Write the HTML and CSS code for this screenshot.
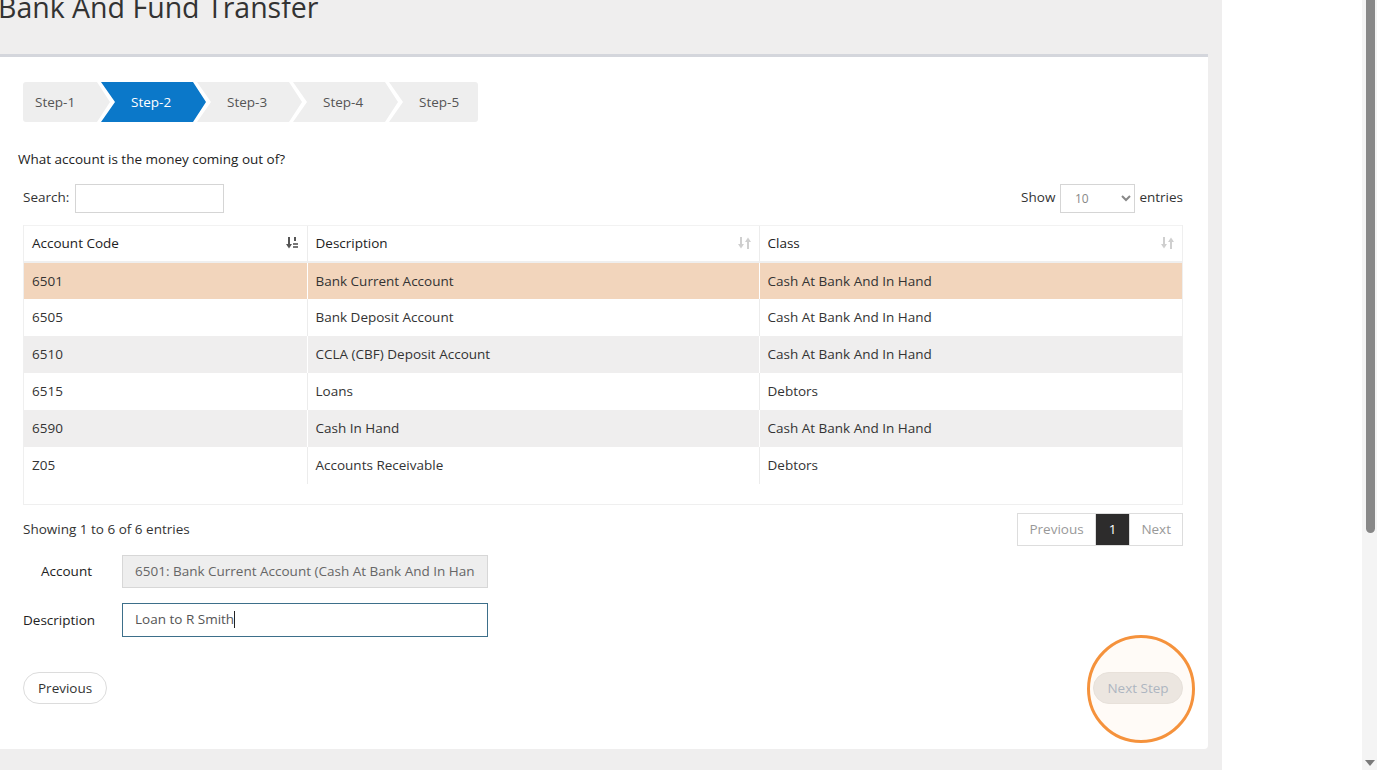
FILE: index.html
```html
<!DOCTYPE html>
<html>
<head>
  <meta charset="utf-8">
  <title>Bank And Fund Transfer</title>
  <link rel="stylesheet" href="styles.css">
</head>
<body>
  <div class="page">
    <div class="main">
      <h1 class="page-title">Bank And Fund Transfer</h1>

      <div class="panel">
        <ul class="steps">
          <li class="step first">Step-1</li>
          <li class="step active">Step-2</li>
          <li class="step">Step-3</li>
          <li class="step">Step-4</li>
          <li class="step last">Step-5</li>
        </ul>

        <p class="question">What account is the money coming out of?</p>

        <div class="table-top">
          <label class="search-label">Search: <input type="text" class="search"></label>
          <label class="length-label">Show
            <select class="length">
              <option>10</option>
              <option>25</option>
              <option>50</option>
            </select>
            entries</label>
        </div>

        <div class="table-wrap">
          <table class="accounts">
            <thead>
              <tr>
                <th class="col-code">Account Code
                  <svg class="sort-icon" width="13" height="12" viewBox="0 0 13 12">
                    <rect x="2" y="0" width="2" height="8" fill="#555"/>
                    <polygon points="0,7 6,7 3,11.5" fill="#555"/>
                    <rect x="8" y="0" width="2" height="4" fill="#555"/>
                    <rect x="7" y="6" width="5" height="2" fill="#777"/>
                    <rect x="7" y="9" width="5" height="2" fill="#777"/>
                  </svg>
                </th>
                <th class="col-desc">Description
                  <svg class="sort-icon" width="13" height="12" viewBox="0 0 13 12">
                    <rect x="2" y="0" width="2" height="8" fill="#cfcfcf"/>
                    <polygon points="0,7 6,7 3,11.5" fill="#cfcfcf"/>
                    <rect x="9" y="4" width="2" height="8" fill="#cfcfcf"/>
                    <polygon points="7,5 13,5 10,0.5" fill="#cfcfcf"/>
                  </svg>
                </th>
                <th class="col-class">Class
                  <svg class="sort-icon" width="13" height="12" viewBox="0 0 13 12">
                    <rect x="2" y="0" width="2" height="8" fill="#cfcfcf"/>
                    <polygon points="0,7 6,7 3,11.5" fill="#cfcfcf"/>
                    <rect x="9" y="4" width="2" height="8" fill="#cfcfcf"/>
                    <polygon points="7,5 13,5 10,0.5" fill="#cfcfcf"/>
                  </svg>
                </th>
              </tr>
            </thead>
            <tbody>
              <tr class="selected">
                <td>6501</td><td>Bank Current Account</td><td>Cash At Bank And In Hand</td>
              </tr>
              <tr>
                <td>6505</td><td>Bank Deposit Account</td><td>Cash At Bank And In Hand</td>
              </tr>
              <tr class="odd">
                <td>6510</td><td>CCLA (CBF) Deposit Account</td><td>Cash At Bank And In Hand</td>
              </tr>
              <tr>
                <td>6515</td><td>Loans</td><td>Debtors</td>
              </tr>
              <tr class="odd">
                <td>6590</td><td>Cash In Hand</td><td>Cash At Bank And In Hand</td>
              </tr>
              <tr>
                <td>Z05</td><td>Accounts Receivable</td><td>Debtors</td>
              </tr>
            </tbody>
          </table>
        </div>

        <div class="table-bottom">
          <div class="info">Showing 1 to 6 of 6 entries</div>
          <div class="pager">
            <a href="#" class="pg">Previous</a>
            <a href="#" class="pg current">1</a>
            <a href="#" class="pg">Next</a>
          </div>
        </div>

        <div class="form-row">
          <label class="form-label account">Account</label>
          <input type="text" class="form-input readonly" value="6501: Bank Current Account (Cash At Bank And In Hand)" readonly>
        </div>
        <div class="form-row">
          <label class="form-label">Description</label>
          <div class="form-input focused">Loan to R Smith<span class="caret"></span></div>
        </div>

        <div class="actions">
          <button type="button" class="btn-round">Previous</button>
          <div class="next-wrap">
            <button type="button" class="btn-round next" disabled>Next Step</button>
            <div class="highlight"></div>
          </div>
        </div>
      </div>
    </div>

    <div class="side"></div>

    <div class="scrollbar">
      <div class="thumb"></div>
      <div class="track"></div>
      <svg class="arrow" width="10" height="8" viewBox="0 0 10 8"><polygon points="0,1 10,1 5,7" fill="#7a7a7a"/></svg>
    </div>
  </div>
</body>
</html>
```

FILE: styles.css
```css
* {
    padding: 0px;
    margin: 0px;
    box-sizing: border-box;
}

html, body {
    height: 100%;
    overflow: hidden;
}

body {
    background-color: #fff;
    font-family: "Open Sans", "Liberation Sans", Arial, sans-serif;
    font-size: 13.5px;
    color: #333;
}

.page {
    display: flex;
    height: 770px;
}

.main {
    width: 1222px;
    background-color: #efeeee;
    padding-right: 14px;
}

.side {
    flex: 1;
    background-color: #fff;
}

/* fake browser scrollbar */
.scrollbar {
    width: 15px;
    background-color: #f4f4f4;
    display: flex;
    flex-direction: column;
    align-items: center;
    padding-bottom: 3px;
}

.scrollbar .thumb {
    width: 9px;
    height: 533px;
    background-color: #888;
    border-radius: 0 0 5px 5px;
    margin-left: 2px;
}

.scrollbar .track {
    flex: 1;
}

.scrollbar .arrow {
    margin-left: 1px;
}

.page-title {
    font-size: 28.5px;
    font-weight: 400;
    line-height: 34px;
    color: #333;
    margin-top: -10px;
    margin-bottom: 30px;
    margin-left: -2px;
}

.panel {
    background-color: #fff;
    border-top: 3px solid #d4d6dc;
    border-radius: 0 0 4px 0;
    padding: 25px 25px 45px 23px;
}

/* wizard steps */
.steps {
    list-style: none;
    display: flex;
    height: 40px;
}

.step {
    height: 40px;
    width: 105px;
    margin-left: -9px;
    padding-left: 30px;
    line-height: 40px;
    background-color: #eeeeee;
    color: #555;
    clip-path: polygon(0 0, calc(100% - 13px) 0, 100% 50%, calc(100% - 13px) 100%, 0 100%, 14px 50%);
}

.step.first {
    width: 87px;
    margin-left: 0;
    padding-left: 12px;
    border-radius: 3px 0 0 3px;
    clip-path: polygon(0 0, calc(100% - 13px) 0, 100% 50%, calc(100% - 13px) 100%, 0 100%);
}

.step.last {
    width: 89px;
    border-radius: 0 3px 3px 0;
    clip-path: polygon(0 0, 100% 0, 100% 100%, 0 100%, 14px 50%);
}

.step.active {
    background-color: #0b78c9;
    color: #fff;
}

.question {
    margin-top: 28px;
    margin-left: -5px;
    line-height: 18px;
    color: #222;
}

/* datatable controls */
.table-top {
    display: flex;
    justify-content: space-between;
    align-items: center;
    margin-top: 16px;
}

.search {
    width: 149px;
    height: 29px;
    border: 1px solid #d5d5d5;
    margin-left: 2px;
    vertical-align: middle;
    font-family: inherit;
}

.length {
    width: 75px;
    height: 29px;
    border: 1px solid #d5d5d5;
    background-color: #fff;
    color: #888;
    font-family: inherit;
    font-size: 12px;
    padding-left: 10px;
    margin: 0 1px;
    vertical-align: middle;
}

.table-wrap {
    margin-top: 12px;
    border: 1px solid #efefef;
    border-top: none;
    padding-bottom: 20px;
}

.accounts {
    width: 100%;
    border-collapse: collapse;
}

.accounts th {
    position: relative;
    text-align: left;
    font-weight: 400;
    color: #222;
    height: 36px;
    padding: 0 8px;
    border-top: 1px solid #f2f2f2;
    border-bottom: 2px solid #efefef;
}

.accounts th + th {
    border-left: 1px solid #ececec;
}

.col-code {
    width: 283px;
}

.col-desc {
    width: 452px;
}

.sort-icon {
    position: absolute;
    right: 8px;
    top: 11px;
}

.accounts td {
    height: 37px;
    padding: 0 8px;
    background-color: #fff;
}

.accounts td + td {
    border-left: 1px solid #ececec;
}

.accounts tr.odd td {
    background-color: #efeeee;
}

.accounts tr.odd td + td,
.accounts tr.selected td + td {
    border-left-color: #fff;
}

.accounts tr.selected td {
    background-color: #f2d5bc;
}

.table-bottom {
    display: flex;
    justify-content: space-between;
    align-items: center;
    margin-top: 8px;
}

.pager {
    display: flex;
    border: 1px solid #dddddd;
    height: 33px;
}

.pg {
    display: block;
    line-height: 31px;
    padding: 0 11px;
    color: #999;
    text-decoration: none;
}

.pg.current {
    padding: 0 13px;
    background-color: #2d2c2c;
    color: #fff;
}

.pg + .pg {
    border-left: 1px solid #dddddd;
}

/* form fields */
.form-row {
    display: flex;
    align-items: center;
    margin-top: 9px;
}

.form-row + .form-row {
    margin-top: 15px;
}

.form-label {
    width: 72px;
    text-align: right;
    color: #222;
    margin-right: 27px;
}

.form-label.account {
    padding-right: 3px;
}

.form-input {
    width: 366px;
    height: 33px;
    border: 1px solid #d7d7d7;
    padding: 0 12px;
    font-family: inherit;
    font-size: 13.5px;
    color: #666;
    line-height: 31px;
}

.form-input.readonly {
    background-color: #eeeeee;
}

.form-input.focused {
    height: 34px;
    border-color: #3d6f8a;
    color: #555;
}

.caret {
    display: inline-block;
    width: 1px;
    height: 17px;
    background-color: #222;
    vertical-align: middle;
}

.actions {
    display: flex;
    justify-content: space-between;
    margin-top: 35px;
}

.btn-round {
    height: 32px;
    padding: 0 14px;
    border: 1px solid #dcdcdc;
    border-radius: 16px;
    background-color: #fff;
    font-family: inherit;
    font-size: 13.5px;
    color: #333;
    white-space: nowrap;
}

.next-wrap {
    position: relative;
}

.btn-round.next {
    width: 90px;
    padding: 0;
    background-color: #ebe9e7;
    border-color: #e6e3e0;
    color: #a7b4c4;
}

/* orange annotation circle */
.highlight {
    position: absolute;
    left: -6px;
    top: -37px;
    width: 108px;
    height: 108px;
    border: 3px solid #f5923c;
    border-radius: 50%;
    background-color: rgba(250, 200, 150, 0.08);
}
```
